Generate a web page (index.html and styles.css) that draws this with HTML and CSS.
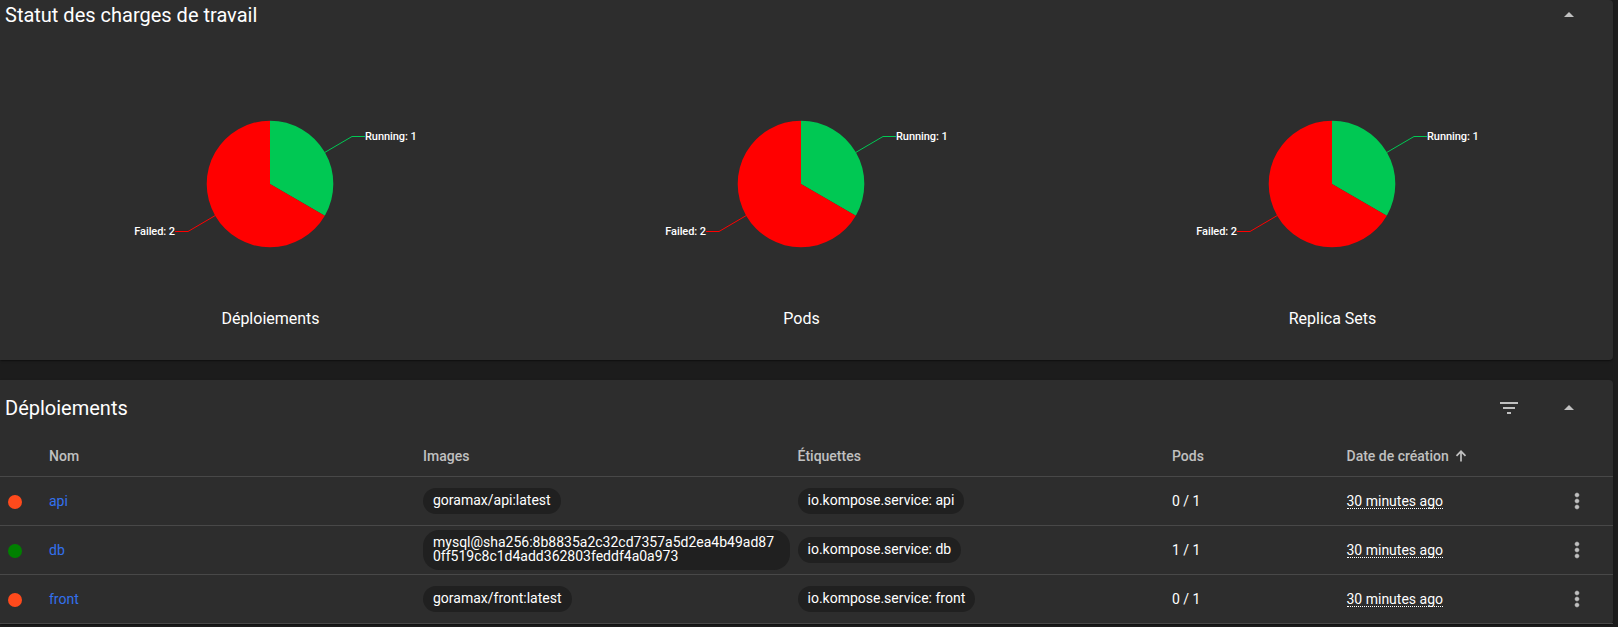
FILE: index.html
```html
<!DOCTYPE html>
<html lang="fr">
<head>
<meta charset="utf-8">
<title>Charges de travail</title>
<link rel="stylesheet" href="styles.css">
</head>
<body>
<svg class="defs" width="0" height="0">
  <symbol id="pie" viewBox="0 0 400 140">
    <path fill="#00c853" d="M200 70V6.700A63.300 63.300 0 0 1 254.800 101.700Z"/>
    <path fill="#f00" d="M200 70L254.800 101.700A63.300 63.300 0 1 1 200 6.700Z"/>
    <path fill="none" stroke="#00c853" d="M255 38.300L282 22.500H295"/>
    <path fill="none" stroke="#f00" d="M145 101.700L118 117.500H105"/>
  </symbol>
  <symbol id="more" viewBox="0 0 24 24"><path stroke="#c0c0c0" stroke-width=".5" d="M12 8c1.100 0 2-.9 2-2s-.9-2-2-2-2 .9-2 2 .9 2 2 2zm0 2c-1.100 0-2 .9-2 2s.9 2 2 2 2-.9 2-2-.9-2-2-2zm0 6c-1.100 0-2 .9-2 2s.9 2 2 2 2-.9 2-2-.9-2-2-2z"/></symbol>
  <symbol id="up" viewBox="0 0 24 24"><path d="M7 14l5-5 5 5z"/></symbol>
  <symbol id="filter" viewBox="0 0 24 24"><path d="M10 18h4v-2h-4v2zM3 6v2h18V6H3zm3 7h12v-2H6v2z"/></symbol>
</svg>
<main class="page">
  <section class="card status">
    <header class="card-head">
      <h2 class="title">Statut des charges de travail</h2>
      <svg class="icon"><use href="#up"/></svg>
    </header>
    <div class="charts">
      <figure class="chart">
        <svg class="pie" viewBox="0 0 400 140"><use href="#pie"/><text x="295" y="26">Running: 1</text><text x="105" y="121" text-anchor="end">Failed: 2</text></svg>
        <figcaption class="caption">Déploiements</figcaption>
      </figure>
      <figure class="chart">
        <svg class="pie" viewBox="0 0 400 140"><use href="#pie"/><text x="295" y="26">Running: 1</text><text x="105" y="121" text-anchor="end">Failed: 2</text></svg>
        <figcaption class="caption">Pods</figcaption>
      </figure>
      <figure class="chart">
        <svg class="pie" viewBox="0 0 400 140"><use href="#pie"/><text x="295" y="26">Running: 1</text><text x="105" y="121" text-anchor="end">Failed: 2</text></svg>
        <figcaption class="caption">Replica Sets</figcaption>
      </figure>
    </div>
  </section>
  <section class="card list">
    <header class="card-head">
      <h2 class="title">Déploiements</h2>
      <svg class="icon"><use href="#filter"/></svg>
      <svg class="icon"><use href="#up"/></svg>
    </header>
    <div class="row head">
      <span></span><span>Nom</span><span>Images</span><span>Étiquettes</span><span>Pods</span>
      <span class="sorted">Date de création<svg class="arrow" viewBox="0 0 12 12"><path d="M6 11.500V1.500M1.500 5.800L6 1.300L10.500 5.800"/></svg></span><span></span>
    </div>
    <div class="row">
      <i class="dot"></i><a class="link">api</a>
      <div><span class="chip">goramax/api:latest</span></div>
      <div><span class="chip">io.kompose.service: api</span></div>
      <span>0 / 1</span><span><span class="date">30 minutes ago</span></span><svg class="icon"><use href="#more"/></svg>
    </div>
    <div class="row">
      <i class="dot ok"></i><a class="link">db</a>
      <div><span class="chip">mysql@sha256:8b8835a2c32cd7357a5d2ea4b49ad870ff519c8c1d4add362803feddf4a0a973</span></div>
      <div><span class="chip">io.kompose.service: db</span></div>
      <span>1 / 1</span><span><span class="date">30 minutes ago</span></span><svg class="icon"><use href="#more"/></svg>
    </div>
    <div class="row">
      <i class="dot"></i><a class="link">front</a>
      <div><span class="chip">goramax/front:latest</span></div>
      <div><span class="chip">io.kompose.service: front</span></div>
      <span>0 / 1</span><span><span class="date">30 minutes ago</span></span><svg class="icon"><use href="#more"/></svg>
    </div>
  </section>
</main>
</body>
</html>
```
FILE: styles.css
```css
* { box-sizing: border-box; }
body {
  margin: 0;
  height: 627px;
  overflow: hidden;
  background: #1c1c1c;
  color: #fff;
  font: 14px/20px Roboto, sans-serif;
}
.defs { position: absolute; }
.page {
  display: flex;
  flex-direction: column;
  gap: 20px;
  padding-right: 5px;
}
.card {
  background: #2d2d2d;
  border-radius: 0 4px 4px 0;
  box-shadow: 0 2px 1px -1px rgba(0,0,0,.2), 0 1px 1px rgba(0,0,0,.14), 0 1px 3px rgba(0,0,0,.12);
}
.status { height: 360px; }
.card-head {
  display: flex;
  align-items: center;
  gap: 36px;
  height: 56px;
  padding: 0 32px 0 5px;
}
.status .card-head { height: 30px; }
.title {
  flex: 1;
  margin: 0;
  font-size: 20px;
  line-height: 24px;
  font-weight: 400;
}
.icon { width: 24px; height: 24px; fill: #c0c0c0; display: block; }
.charts {
  display: grid;
  grid-template-columns: repeat(3, 531px);
  padding: 84px 0 0 4.500px;
}
.chart {
  margin: 0;
  display: flex;
  flex-direction: column;
  align-items: center;
}
.pie { width: 400px; height: 140px; }
.pie text { fill: #fff; font-size: 11px; font-weight: 500; letter-spacing: -.07px; }
.caption {
  margin-top: 55px;
  padding-left: 1px;
  font-size: 16px;
  line-height: 20px;
}
.row {
  display: grid;
  grid-template-columns: 41px 374px 374.500px 374.500px 174.500px 218.500px 24px;
  align-items: center;
  height: 49px;
  padding-left: 8px;
  border-bottom: 1px solid #484848;
}
.row.head {
  height: 41px;
  color: #c0c0c0;
  font-weight: 500;
}
.dot {
  width: 14px;
  height: 14px;
  margin-top: 2px;
  border-radius: 50%;
  background: #ff4a1c;
}
.dot.ok { background: #008000; }
.link { color: #3371ee; }
.chip {
  display: block;
  width: fit-content;
  max-width: 367px;
  padding: 5px 10px 7px;
  border-radius: 16px;
  background: #202020;
  line-height: 14px;
  word-break: break-all;
}
.date { border-bottom: 1px dotted #fff; line-height: 14px; display: inline-block; }
.sorted { display: flex; align-items: center; gap: 6px; }
.arrow { width: 12px; height: 12px; fill: none; stroke: #c0c0c0; stroke-width: 1.700; }
```
